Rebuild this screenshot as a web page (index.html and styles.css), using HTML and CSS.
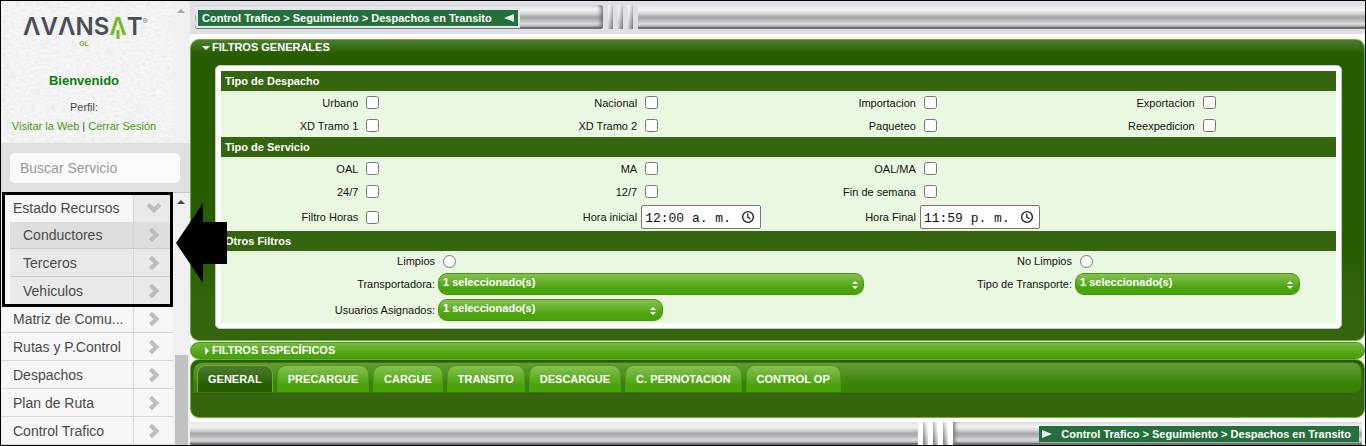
FILE: index.html
```html
<!DOCTYPE html>
<html lang="es">
<head>
<meta charset="utf-8">
<title>Despachos en Transito</title>
<link rel="stylesheet" href="styles.css">
</head>
<body>
<svg class="defs" aria-hidden="true">
  <symbol id="chev" viewBox="0 0 12 12"><path d="M3 1 8 6 3 11" fill="none" stroke="#bdbdbd" stroke-width="3.6"/></symbol>
  <symbol id="updown" viewBox="0 0 6 8"><path d="M3 0 6 3H0zM0 5h6L3 8z" fill="#fff"/></symbol>
  <symbol id="clock" viewBox="0 0 14 14"><circle cx="7" cy="7" r="5.4" fill="none" stroke="#222" stroke-width="1.4"/><path d="M6.8 3.5V7l2.6 1.9" fill="none" stroke="#222" stroke-width="1.3"/></symbol>
</svg>
<div class="page">
  <aside class="side">
    <div class="top">
      <div class="profile">
        <svg class="texture" aria-hidden="true"><filter id="grain"><feTurbulence type="fractalNoise" baseFrequency="0.2 0.35" numOctaves="3" seed="4"/><feColorMatrix values="0 0 0 0 .5  0 0 0 0 .5  0 0 0 0 .5  0.4 0 0 0 -.15"/></filter><rect width="100%" height="100%" filter="url(#grain)"/></svg>
        <div class="logo"><span>ΛVΛNS</span><span class="leaf">Λ<svg viewBox="0 0 4 9"><path d="M2 0v9" stroke="#76b82a" stroke-width="3"/></svg></span><span>T</span><sup>®</sup></div>
        <div class="gl">GL</div>
        <div class="hello">Bienvenido</div>
        <div class="perfil">Perfil:</div>
        <div class="links"><a href="#">Visitar la Web</a> | <a href="#">Cerrar Sesión</a></div>
      </div>
      <div class="rail"><i class="up pale"></i></div>
    </div>
    <div class="search"><input type="text" placeholder="Buscar Servicio" aria-label="Buscar Servicio"></div>
    <div class="lower">
      <nav class="menu">
        <a class="item first" href="#"><span>Estado Recursos</span><b><svg class="down"><use href="#chev"/></svg></b></a>
        <div class="sub">
          <a class="item active" href="#"><span>Conductores</span><b><svg><use href="#chev"/></svg></b></a>
          <a class="item" href="#"><span>Terceros</span><b><svg><use href="#chev"/></svg></b></a>
          <a class="item" href="#"><span>Vehiculos</span><b><svg><use href="#chev"/></svg></b></a>
        </div>
        <a class="item" href="#"><span>Matriz de Comu...</span><b><svg><use href="#chev"/></svg></b></a>
        <a class="item" href="#"><span>Rutas y P.Control</span><b><svg><use href="#chev"/></svg></b></a>
        <a class="item" href="#"><span>Despachos</span><b><svg><use href="#chev"/></svg></b></a>
        <a class="item" href="#"><span>Plan de Ruta</span><b><svg><use href="#chev"/></svg></b></a>
        <a class="item" href="#"><span>Control Trafico</span><b><svg><use href="#chev"/></svg></b></a>
      </nav>
      <div class="rail"><i class="up"></i><i class="thumb"></i></div>
      <div class="frame"></div>
      <svg class="pointer" viewBox="0 0 51 80"><path d="M0 40 27 0V19H51V61H27V80z"/></svg>
    </div>
  </aside>
  <main class="main">
    <header class="band">
      <div class="pipe start"><div class="crumb">Control Trafico &gt; Seguimiento &gt; Despachos en Transito<svg viewBox="0 0 10 8"><path d="M0 4 10 0V8z" fill="#e8f2ea"/></svg></div></div>
      <i class="ring"></i><i class="ring"></i><i class="ring"></i>
      <div class="pipe grow"></div>
    </header>
    <section class="panel">
      <h3><i class="tri open"></i>FILTROS GENERALES</h3>
      <form class="sheet">
        <h4>Tipo de Despacho</h4>
        <div class="grid">
          <label for="c1">Urbano</label><div><input type="checkbox" id="c1"></div>
          <label for="c2">Nacional</label><div><input type="checkbox" id="c2"></div>
          <label for="c3">Importacion</label><div><input type="checkbox" id="c3"></div>
          <label for="c4">Exportacion</label><div><input type="checkbox" id="c4"></div>
          <label for="c5">XD Tramo 1</label><div><input type="checkbox" id="c5"></div>
          <label for="c6">XD Tramo 2</label><div><input type="checkbox" id="c6"></div>
          <label for="c7">Paqueteo</label><div><input type="checkbox" id="c7"></div>
          <label for="c8">Reexpedicion</label><div><input type="checkbox" id="c8"></div>
        </div>
        <h4>Tipo de Servicio</h4>
        <div class="grid">
          <label for="s1">OAL</label><div><input type="checkbox" id="s1"></div>
          <label for="s2">MA</label><div><input type="checkbox" id="s2"></div>
          <label for="s3">OAL/MA</label><div class="last"><input type="checkbox" id="s3"></div>
          <label for="s4">24/7</label><div><input type="checkbox" id="s4"></div>
          <label for="s5">12/7</label><div><input type="checkbox" id="s5"></div>
          <label for="s6">Fin de semana</label><div class="last"><input type="checkbox" id="s6"></div>
          <label for="s7">Filtro Horas</label><div><input type="checkbox" id="s7"></div>
          <label for="s8">Hora inicial</label><div class="time"><input type="text" id="s8" value="12:00 a. m."><svg><use href="#clock"/></svg></div>
          <label for="s9">Hora Final</label><div class="time last"><input type="text" id="s9" value="11:59 p. m."><svg><use href="#clock"/></svg></div>
        </div>
        <h4>Otros Filtros</h4>
        <div class="grid other">
          <label for="r1">Limpios</label><div><input type="radio" name="limpio" id="r1"></div>
          <label for="r2">No Limpios</label><div><input type="radio" name="limpio" id="r2"></div>
          <label for="o1">Transportadora:</label><div class="pick wide"><select id="o1"><option>1 seleccionado(s)</option></select><svg><use href="#updown"/></svg></div>
          <label for="o2">Tipo de Transporte:</label><div class="pick"><select id="o2"><option>1 seleccionado(s)</option></select><svg><use href="#updown"/></svg></div>
          <label for="o3">Usuarios Asignados:</label><div class="pick"><select id="o3"><option>1 seleccionado(s)</option></select><svg><use href="#updown"/></svg></div>
        </div>
      </form>
    </section>
    <h3 class="closed"><i class="tri"></i>FILTROS ESPECÍFICOS</h3>
    <section class="tabs">
      <div class="tabbar">
        <button class="on" type="button">GENERAL</button><button type="button">PRECARGUE</button><button type="button">CARGUE</button><button type="button">TRANSITO</button><button type="button">DESCARGUE</button><button type="button">C. PERNOTACION</button><button type="button">CONTROL OP</button>
      </div>
    </section>
    <footer class="foot">
      <div class="pipe grow"></div>
      <i class="ring"></i><i class="ring"></i><i class="ring"></i>
      <div class="pipe end"><div class="crumb"><svg viewBox="0 0 10 8"><path d="M10 4 0 0V8z" fill="#e8f2ea"/></svg>Control Trafico &gt; Seguimiento &gt; Despachos en Transito</div></div>
    </footer>
  </main>
</div>
</body>
</html>
```
FILE: styles.css
```css
* { box-sizing: border-box; }
body { margin: 0; font: 11px/14px "Liberation Sans", Arial, sans-serif; color: #111; background: #fff; }
a { text-decoration: none; }
h3, h4 { margin: 0; font-size: 11px; color: #fff; }
.defs { position: absolute; width: 0; height: 0; }
.page { display: flex; border: 1px solid #000; }

/* sidebar */
.side { width: 189px; flex: none; background: #f0f0f0; }
.top, .lower { display: flex; position: relative; }
.profile { position: relative; flex: 1; height: 142px; padding: 14px 6px 0 0; background: #f5f5f5; text-align: center; }
.texture { position: absolute; left: 0; top: 0; width: 100%; height: 100%; }
.logo { position: relative; display: flex; justify-content: center; padding-left: 3px; font: 600 24px/24px Inter, sans-serif; color: #4a4f55; }
.logo sup { font-size: 8px; line-height: 8px; padding-top: 2px; color: #888; }
.leaf { position: relative; color: #76b82a; }
.leaf svg { position: absolute; left: 7px; top: 15px; width: 4px; height: 9px; }
.gl { position: relative; font-size: 7px; line-height: 10px; font-weight: bold; color: #7dbb3c; }
.hello { position: relative; margin-top: 24px; font-size: 13px; line-height: 16px; font-weight: bold; color: #0a800f; }
.perfil { position: relative; margin-top: 11px; color: #444; }
.links { position: relative; margin-top: 5px; color: #3c5a8a; }
.links a { color: #4c9a0a; }
.rail { width: 17px; flex: none; position: relative; background: #f0f0f0; }
.up { position: absolute; left: 4px; top: 7px; border: 4px solid transparent; border-top: 0; border-bottom-color: #444; }
.up.pale { top: 8px; border-bottom-color: #a3a3a3; }
.thumb { position: absolute; left: 2px; bottom: 0; width: 13px; height: 90px; background: #c1c1c1; }
.search { height: 50px; padding: 10px 10px 9px 9px; background: #e0e0e0; border-bottom: 1px solid #c8c8c8; }
.search input { width: 100%; height: 30px; border: 0; border-radius: 5px; padding: 0 10px; background: #fafafa; font: 14px "Liberation Sans", Arial, sans-serif; }
.search input::placeholder { color: #999; }
.menu { flex: 1; min-width: 0; background: #f6f6f6; }
.item { display: flex; height: 28px; border-bottom: 1px solid #d6d6d6; font-size: 14px; line-height: 28px; color: #4a4a4a; }
.item span { flex: 1; padding-left: 12px; white-space: nowrap; }
.item b { width: 40px; display: flex; align-items: center; padding-left: 13px; border-left: 1px solid #d6d6d6; }
.item svg { width: 14px; height: 14px; }
.item .down { transform: rotate(90deg); }
.first { height: 29px; line-height: 30px; border: 0; }
.first b { background: #e9e9e9; }
.sub { padding-left: 9px; }
.sub .item { background: #e9e9e9; border-color: #c8c8c8; }
.sub .active { height: 27px; line-height: 26px; background: #dedede; }
.sub span { padding-left: 13px; }
.frame { position: absolute; left: 1px; top: -1px; width: 171px; height: 115px; border: 3px solid #000; }
.pointer { position: absolute; left: 175px; top: 10px; width: 51px; height: 80px; z-index: 2; }

/* metal bars */
.main { flex: 1; min-width: 0; }
.band { display: flex; height: 33px; padding: 4px 0 5px 5px; background: #dfe0e7; }
.pipe { background: linear-gradient(#e2e3e6, #f4f4f4 20%, #d4d5d7 36%, #a5a9ab 50%, #aeb2b4 60%, #d9dcdc 78%, #b8babb 88%, #6a6c6e 94%, #77797b); }
.grow { flex: 1; }
.start { width: 408px; padding: 5px 0 3px 3px; border-radius: 3px; box-shadow: inset -4px 0 4px -2px #666; }
.start .crumb { width: 320px; }
.crumb { display: flex; align-items: center; height: 16px; padding: 0 4px; background: #246f3b; color: #fff; font-weight: bold; white-space: nowrap; box-shadow: 0 0 0 2px #e4e6e8; justify-content: space-between; }
.crumb svg { width: 10px; height: 8px; }
.ring { width: 5px; margin-left: 5px; background: linear-gradient(100deg, #f2f2f2 20%, #b4b6b8 60%, #6f7173); }
.ring + .pipe { margin-left: 5px; }
.foot { display: flex; height: 23px; margin-top: 4px; }
.foot .ring { background: linear-gradient(260deg, #f2f2f2 20%, #b4b6b8 60%, #6f7173); }
.end { width: 409px; padding: 4px 3px 3px 0; margin-right: 3px; display: flex; justify-content: flex-end; box-shadow: inset 4px 0 4px -2px #777; }
.end .crumb { width: 320px; padding: 0 8px 0 3px; box-shadow: none; }

/* filters */
.panel { margin-top: 5px; padding: 0 22px 11px 24px; border: 1px solid #6fb02b; border-radius: 9px; background: linear-gradient(#4d7c32, #275d00 14px, #275d00 70%, #36650f 88%); }
.panel h3 { height: 25px; line-height: 15px; margin-left: -14px; display: flex; align-items: flex-start; }
.tri { width: 11px; height: 15px; flex: none; display: flex; align-items: center; }
.tri::before { content: ""; border: 4px solid transparent; border-left: 4px solid #fff; border-right: 0; margin-left: 4px; }
.tri.open::before { border: 4px solid transparent; border-top-color: #fff; border-bottom: 0; margin-left: 1px; }
.sheet { padding: 5px; background: #fff; border: 1px solid #c4c8c0; border-radius: 5px; }
.sheet h4 { height: 20px; line-height: 20px; padding-left: 4px; background: #36650f; }
.grid { display: grid; grid-template-columns: repeat(8, 1fr); grid-auto-rows: minmax(23px, auto); align-items: center; background: #eaf8e1; }
.grid label { text-align: right; padding-right: 2px; white-space: nowrap; }
.grid > div { display: flex; align-items: center; position: relative; }
.grid > .last { grid-column: span 3; }
.grid input[type=checkbox], .grid input[type=radio] { margin: 0 0 0 6px; width: 13px; height: 13px; }
.grid > .time { padding: 2px 0 2px 2px; }
.time input { width: 120px; height: 24px; border: 1px solid #767676; border-radius: 2px; padding: 2px 0 0 3px; font: 13px "Liberation Mono", monospace; color: #111; }
.time svg { position: absolute; left: 102px; top: 7px; width: 14px; height: 14px; }
.other { grid-template-columns: 216fr 428fr 209fr 262fr; grid-template-rows: 20px 26px 26px; }
.pick { padding-left: 1px; width: 226px; }
.pick.wide { width: auto; padding-right: 1px; }
.pick select { appearance: none; width: 100%; height: 22px; padding: 0 4px 4px; border: 1px solid #459510; border-radius: 9px; background: linear-gradient(#85c053, #4aa30a 75%); color: #fff; font: bold 11px "Liberation Sans", Arial, sans-serif; }
.pick svg { position: absolute; right: 7px; top: 8px; width: 6px; height: 8px; }
.closed { height: 17px; margin-top: 1px; padding-left: 10px; line-height: 15px; display: flex; border: 1px solid #459510; border-radius: 9px; background: linear-gradient(#77b944, #4aa30a 80%); }

/* tabs */
.tabs { padding: 2px 2px 24px; border: 1px solid #6fb02b; border-radius: 9px; background: linear-gradient(#275d00, #36650f 30px); }
.tabbar { display: flex; gap: 4px; height: 31px; padding: 2px 3px 0; border: 1px solid #3b7808; border-radius: 9px; border-bottom-left-radius: 0; background: linear-gradient(#659b38, #388305 75%); }
.tabbar button { height: 27px; padding: 0 10px; border: 1px solid #4a9a12; border-bottom: 0; border-radius: 9px 9px 0 0; background: linear-gradient(#85c053, #4aa30a 75%); color: #fff; font: bold 11px "Liberation Sans", Arial, sans-serif; white-space: nowrap; }
.tabbar .on { border-color: #6fb02b; background: linear-gradient(#4d7c32, #275d00 75%); }
```
